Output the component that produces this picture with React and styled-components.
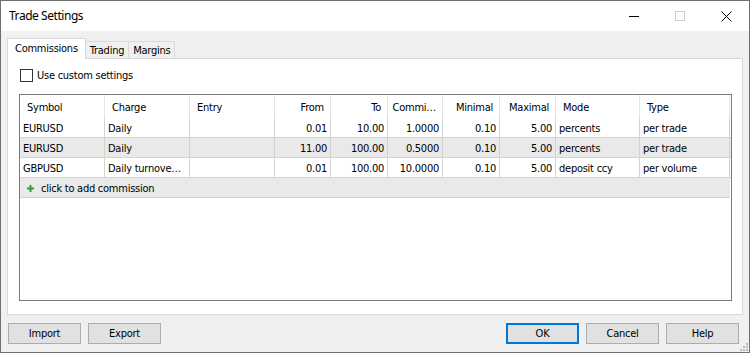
import React from "react";
import styled, { createGlobalStyle } from "styled-components";

const GlobalStyle = createGlobalStyle`
  html, body {
    margin: 0;
    padding: 0;
    background: #fff;
  }
  body {
    font-family: "DejaVu Sans Condensed", "DejaVu Sans", sans-serif;
    font-stretch: condensed;
    font-size: 11px;
    letter-spacing: -0.25px;
    color: #000;
  }
  * {
    box-sizing: border-box;
  }
`;

const Window = styled.div`
  position: relative;
  width: 750px;
  height: 353px;
  border: 1px solid #6f6f6f;
  background: #f0f0f0;
  display: flex;
  flex-direction: column;
`;

const TitleBar = styled.div`
  flex: none;
  height: 30px;
  background: #fff;
  display: flex;
  align-items: center;
  padding-left: 8px;
`;

const Title = styled.div`
  flex: 1;
  font-family: "Noto Sans", sans-serif;
  font-stretch: normal;
  font-size: 12px;
  letter-spacing: -0.45px;
  padding-bottom: 1px;
`;

const CaptionButton = styled.div`
  width: 46px;
  height: 30px;
  display: flex;
  align-items: center;
  justify-content: center;
`;

const Content = styled.div`
  flex: 1;
  display: flex;
  flex-direction: column;
  padding: 7px 6px 8px;
  min-height: 0;
`;

const TabStrip = styled.div`
  flex: none;
  height: 20px;
  display: flex;
  align-items: flex-end;
`;

const Tab = styled.div`
  position: relative;
  z-index: ${(p) => (p.$active ? 2 : 1)};
  height: ${(p) => (p.$active ? "21px" : "17px")};
  margin-bottom: ${(p) => (p.$active ? "-1px" : "0")};
  margin-left: ${(p) => (p.$first ? "0" : "-1px")};
  padding: 0 ${(p) => (p.$active ? "7px" : "4px")};
  border: 1px solid #d9d9d9;
  border-bottom: none;
  background: ${(p) => (p.$active ? "#fff" : "#f0f0f0")};
  display: flex;
  align-items: center;
  padding-bottom: ${(p) => (p.$active ? "2px" : "0")};
  white-space: nowrap;
`;

const Pane = styled.div`
  flex: 1;
  min-height: 0;
  background: #fff;
  border: 1px solid #d9d9d9;
  display: flex;
  flex-direction: column;
  padding: 9px 10px 13px 11px;
`;

const CheckRow = styled.label`
  display: flex;
  align-items: center;
  gap: 4px;
  height: 13px;
  margin-left: 1px;
  padding-top: 1px;
`;

const CheckBox = styled.span`
  width: 13px;
  height: 13px;
  border: 1px solid #333;
  background: #fff;
`;

const Table = styled.div`
  margin-top: 13px;
  flex: 1;
  border: 1px solid #7a7a7a;
  background: #fff;
  overflow: hidden;
`;

const COLS = "85px 85px 85px 56px 57px 55px 57px 56px 84px 90px";

const HeaderRow = styled.div`
  display: grid;
  grid-template-columns: ${COLS};
  height: 23px;
`;

const HeadCell = styled.div`
  display: flex;
  align-items: center;
  justify-content: ${(p) => (p.$right ? "flex-end" : "flex-start")};
  padding: 1px 6px 0 7px;
  border-right: 1px solid #e5e5e5;
  white-space: nowrap;
  overflow: hidden;
`;

const Row = styled.div`
  display: grid;
  grid-template-columns: ${COLS};
  height: 20px;
  border-bottom: 1px solid #d3d3d3;
  background: ${(p) => (p.$alt ? "#e9e9e9" : "#fff")};
`;

const Cell = styled.div`
  display: flex;
  align-items: center;
  justify-content: ${(p) => (p.$right ? "flex-end" : "flex-start")};
  padding: 2px 3px 0;
  border-right: 1px solid #d3d3d3;
  white-space: nowrap;
  overflow: hidden;
`;

const AddRow = styled.div`
  width: 710px;
  height: 20px;
  display: flex;
  align-items: center;
  gap: 7px;
  padding: 2px 0 0 7px;
  background: #e9e9e9;
  border-bottom: 1px solid #d3d3d3;
`;

const ButtonRow = styled.div`
  flex: none;
  margin-top: 8px;
  padding-left: 1px;
  padding-right: 4px;
  display: flex;
  gap: 7px;
`;

const Spacer = styled.div`
  flex: 1;
`;

const Button = styled.button`
  width: 73px;
  height: 21px;
  margin: 0;
  padding: 0 0 1px;
  font: inherit;
  font-stretch: condensed;
  letter-spacing: -0.25px;
  color: #000;
  background: #e1e1e1;
  border: ${(p) => (p.$default ? "2px solid #0078d7" : "1px solid #adadad")};
`;

const Grip = styled.svg`
  position: absolute;
  right: 1px;
  bottom: 1px;
`;

const columns = [
  { label: "Symbol" },
  { label: "Charge" },
  { label: "Entry" },
  { label: "From", right: true },
  { label: "To", right: true },
  { label: "Commi…", right: true },
  { label: "Minimal", right: true },
  { label: "Maximal", right: true },
  { label: "Mode" },
  { label: "Type" },
];

const rows = [
  ["EURUSD", "Daily", "", "0.01", "10.00", "1.0000", "0.10", "5.00", "percents", "per trade"],
  ["EURUSD", "Daily", "", "11.00", "100.00", "0.5000", "0.10", "5.00", "percents", "per trade"],
  ["GBPUSD", "Daily turnove…", "", "0.01", "100.00", "10.0000", "0.10", "5.00", "deposit ccy", "per volume"],
];

export default function App() {
  return (
    <>
      <GlobalStyle />
      <Window>
        <TitleBar>
          <Title>Trade Settings</Title>
          <CaptionButton>
            <svg width="10" height="10" viewBox="0 0 10 10">
              <path d="M0 5.5H10" stroke="#000" strokeWidth="1" />
            </svg>
          </CaptionButton>
          <CaptionButton>
            <svg width="10" height="10" viewBox="0 0 10 10">
              <rect x="0.5" y="0.5" width="9" height="9" fill="none" stroke="#cccccc" />
            </svg>
          </CaptionButton>
          <CaptionButton>
            <svg width="11" height="11" viewBox="0 0 11 11">
              <path d="M0.5 0.5L10.5 10.5M10.5 0.5L0.5 10.5" stroke="#000" strokeWidth="1" />
            </svg>
          </CaptionButton>
        </TitleBar>
        <Content>
          <TabStrip>
            <Tab $active $first>Commissions</Tab>
            <Tab>Trading</Tab>
            <Tab>Margins</Tab>
          </TabStrip>
          <Pane>
            <CheckRow>
              <CheckBox />
              Use custom settings
            </CheckRow>
            <Table>
              <HeaderRow>
                {columns.map((c) => (
                  <HeadCell key={c.label} $right={c.right}>
                    {c.label}
                  </HeadCell>
                ))}
              </HeaderRow>
              {rows.map((r, i) => (
                <Row key={i} $alt={i === 1}>
                  {r.map((v, j) => (
                    <Cell key={j} $right={columns[j].right}>
                      {v}
                    </Cell>
                  ))}
                </Row>
              ))}
              <AddRow>
                <svg width="7" height="7" viewBox="0 0 7 7">
                  <path d="M3.5 0V7M0 3.5H7" stroke="#2ea02e" strokeWidth="2" />
                </svg>
                click to add commission
              </AddRow>
            </Table>
          </Pane>
          <ButtonRow>
            <Button>Import</Button>
            <Button>Export</Button>
            <Spacer />
            <Button $default>OK</Button>
            <Button>Cancel</Button>
            <Button>Help</Button>
          </ButtonRow>
        </Content>
        <Grip width="8" height="8" viewBox="0 0 8 8">
          <rect x="6" y="0" width="2" height="2" fill="#b8b8b8" />
          <rect x="3" y="3" width="2" height="2" fill="#b8b8b8" />
          <rect x="6" y="3" width="2" height="2" fill="#b8b8b8" />
          <rect x="0" y="6" width="2" height="2" fill="#b8b8b8" />
          <rect x="3" y="6" width="2" height="2" fill="#b8b8b8" />
          <rect x="6" y="6" width="2" height="2" fill="#b8b8b8" />
        </Grip>
      </Window>
    </>
  );
}
